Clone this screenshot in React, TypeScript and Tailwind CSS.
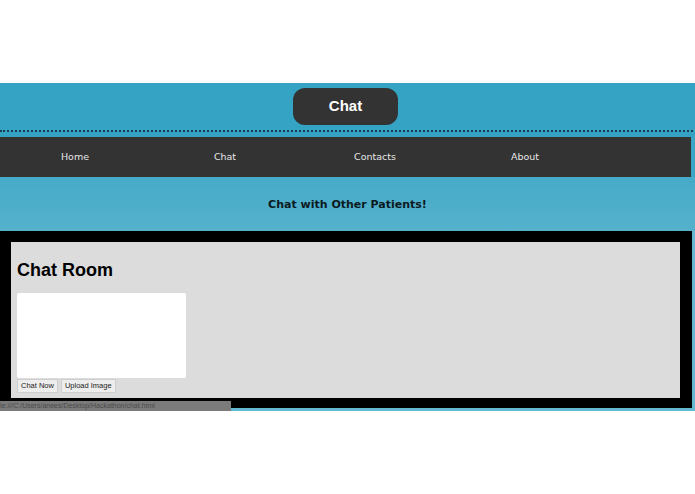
import React from "react";

export default function App() {
  return (
    <div className="w-[695px] h-[494px] bg-white relative overflow-hidden" style={{ fontFamily: '"DejaVu Sans", Verdana, sans-serif' }}>
      <div className="h-[83px]" />
      <div className="bg-[#34a3c4]">
        <div className="h-[47px] flex items-start justify-center pt-[5px] pr-[4px]">
          <div className="w-[105px] h-[37px] rounded-[12px] bg-[#333333] flex items-center justify-center text-white text-[15px] font-bold" style={{ fontFamily: '"Liberation Sans", Arial, sans-serif' }}>
            Chat
          </div>
        </div>
        <div className="border-t-2 border-dotted border-[#1c3d52] mr-[2px]" />
        <div className="h-[5px]" />
      </div>
      <div className="flex bg-[#3aa6c6]">
        <div className="w-[691px] h-[40px] bg-[#333333] flex items-center text-[#e6e6e6] text-[9.5px]">
          <div className="w-[150px] text-center">Home</div>
          <div className="w-[150px] text-center">Chat</div>
          <div className="w-[150px] text-center">Contacts</div>
          <div className="w-[150px] text-center">About</div>
        </div>
      </div>
      <div className="h-[54px] bg-gradient-to-b from-[#45abc8] to-[#55b1cc] flex items-center justify-center pt-[2px]">
        <div className="text-[11px] font-bold text-[#0b1a22]">Chat with Other Patients!</div>
      </div>
      <div className="bg-[#62b9d1] pb-[3px] pr-[3px]">
        <div className="bg-black pl-[11px] pt-[11px] pr-[12px] pb-[10px]">
          <div className="bg-[#dcdcdc] h-[156px] px-[6px] pt-[16px]" style={{ fontFamily: '"Liberation Sans", Arial, sans-serif' }}>
            <h1 className="text-[18px] font-bold text-black leading-[24px]">Chat Room</h1>
            <div className="mt-[11px] w-[169px] h-[85px] bg-white rounded-[2px]" />
            <div className="flex gap-[3px] mt-[1px]">
              <button className="h-[14px] px-[3px] bg-[#ededed] border border-[#cfcfcf] text-[7.5px] text-[#222] leading-none">Chat Now</button>
              <button className="h-[14px] px-[3px] bg-[#ededed] border border-[#cfcfcf] text-[7.5px] text-[#222] leading-none">Upload Image</button>
            </div>
          </div>
        </div>
      </div>
      <div className="absolute left-0 top-[401px] w-[231px] h-[10px] bg-[#7b7b7b] text-[7px] leading-[10px] text-[#4a4a4a] whitespace-nowrap overflow-hidden" style={{ fontFamily: '"Liberation Sans", Arial, sans-serif' }}>
        <span>le:///C:/Users/anees/Desktop/Hackathon/chat.html</span>
      </div>
    </div>
  );
}
